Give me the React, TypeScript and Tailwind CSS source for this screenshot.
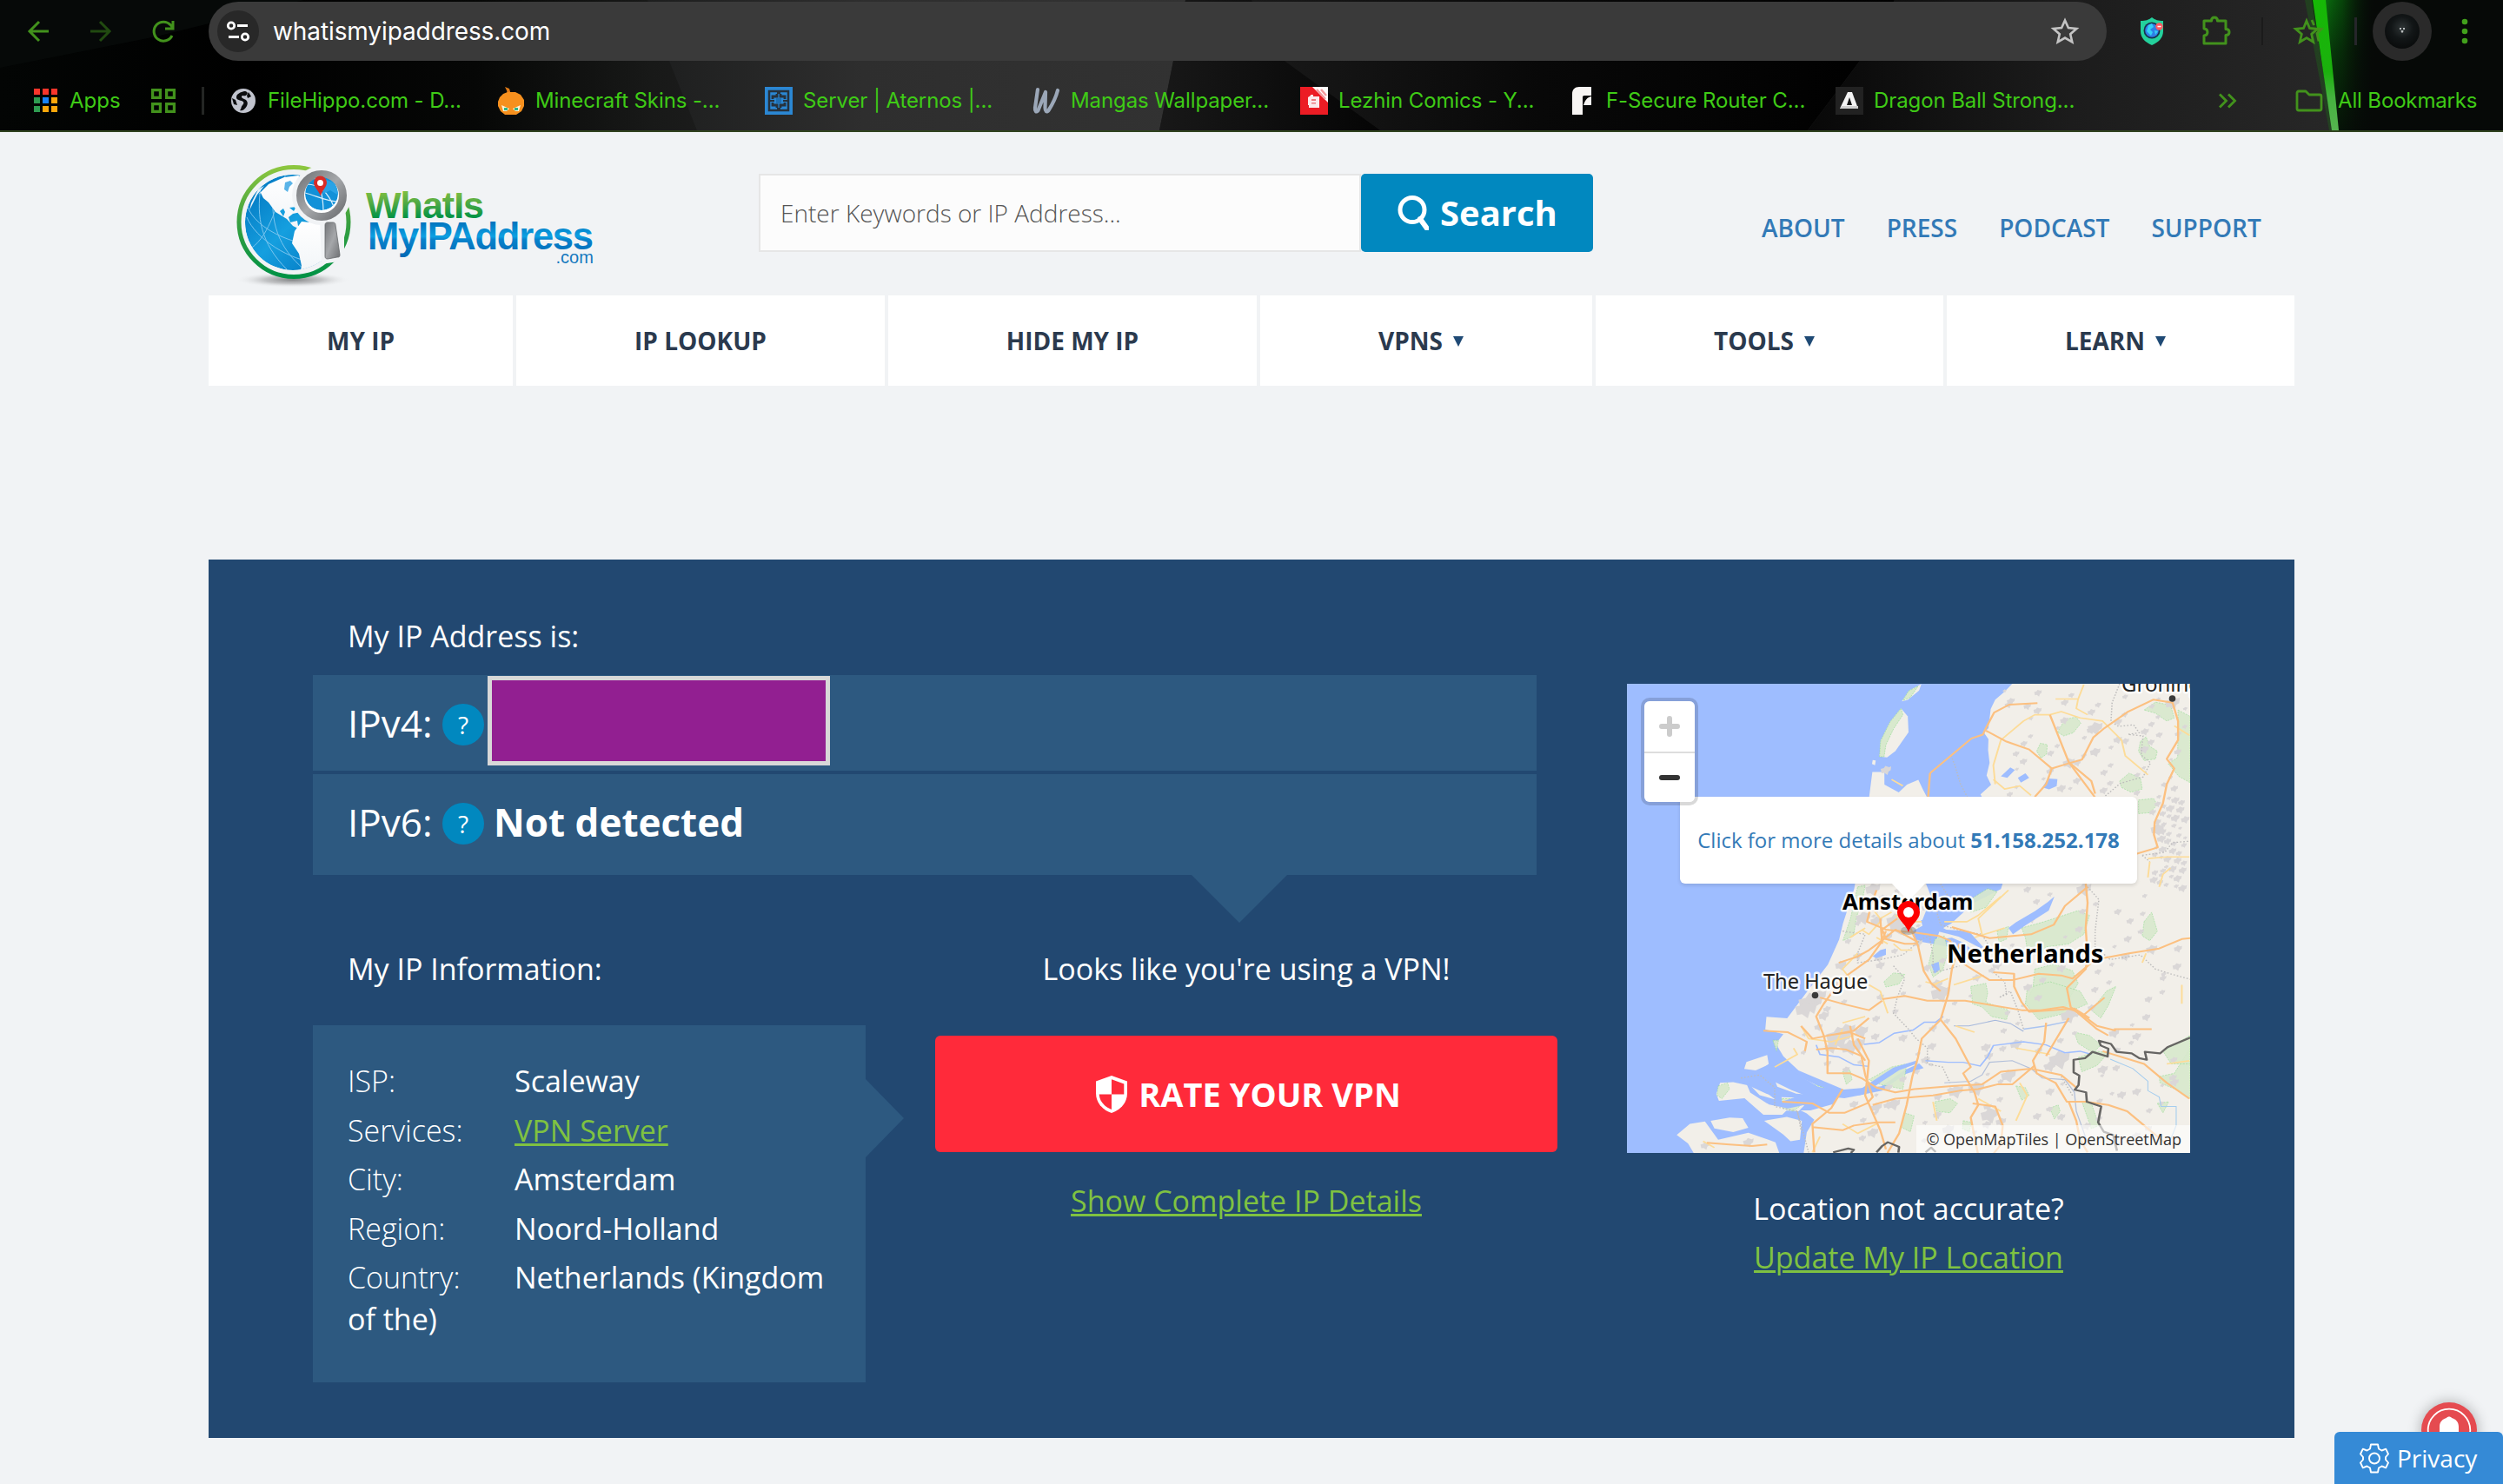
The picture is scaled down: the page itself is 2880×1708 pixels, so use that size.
import React from 'react';

/* ---------- Browser chrome ---------- */

function ThemeBackdrop() {
  return (
    <svg className="absolute inset-0 h-full w-full" viewBox="0 0 2880 150" preserveAspectRatio="none" aria-hidden="true">
      <defs>
        <linearGradient id="bg" x1="0" x2="1" y1="0" y2="0">
          <stop offset="0" stopColor="#030504" />
          <stop offset="0.1" stopColor="#000000" />
          <stop offset="0.19" stopColor="#060706" />
          <stop offset="0.26" stopColor="#181918" />
          <stop offset="0.3" stopColor="#1e1e1e" />
        </linearGradient>
        <linearGradient id="facetA" x1="0" x2="1" y1="0" y2="0">
          <stop offset="0" stopColor="#1d1e1e" />
          <stop offset="0.4" stopColor="#2e2e2e" />
          <stop offset="1" stopColor="#323232" />
        </linearGradient>
        <linearGradient id="facetB" x1="0" x2="1" y1="0" y2="0">
          <stop offset="0" stopColor="#181818" />
          <stop offset="1" stopColor="#050505" />
        </linearGradient>
        <linearGradient id="facetC" x1="0" x2="1" y1="0" y2="0">
          <stop offset="0" stopColor="#191919" />
          <stop offset="0.45" stopColor="#080808" />
          <stop offset="1" stopColor="#000000" />
        </linearGradient>
        <linearGradient id="facetD" x1="0" x2="1" y1="0" y2="0">
          <stop offset="0" stopColor="#080808" />
          <stop offset="0.5" stopColor="#1c1c1c" />
          <stop offset="1" stopColor="#272727" />
        </linearGradient>
        <linearGradient id="glow" x1="0" x2="1" y1="0" y2="0">
          <stop offset="0" stopColor="#0b7a10" />
          <stop offset="0.4" stopColor="#075c0b" stopOpacity="0.7" />
          <stop offset="1" stopColor="#060907" stopOpacity="0" />
        </linearGradient>
        <linearGradient id="glowFade" x1="0" x2="0" y1="0" y2="1">
          <stop offset="0" stopColor="#060907" stopOpacity="0" />
          <stop offset="0.4" stopColor="#060907" stopOpacity="0.45" />
          <stop offset="1" stopColor="#060907" stopOpacity="0.85" />
        </linearGradient>
        <linearGradient id="beam" x1="0" x2="0" y1="0" y2="1">
          <stop offset="0" stopColor="#16b806" />
          <stop offset="0.55" stopColor="#1bb10d" />
          <stop offset="0.75" stopColor="#45b33f" />
          <stop offset="1" stopColor="#56b450" />
        </linearGradient>
      </defs>
      <rect width="2880" height="150" fill="url(#bg)" />
      <path d="M0 0H350L180 42L0 78Z" fill="#060908" />
      <path d="M745 0H1364L1350 70L1334 150H802L770 70Z" fill="url(#facetA)" />
      <path d="M1364 0H1460L1590 150H1334Z" fill="url(#facetB)" />
      <path d="M1440 0H2180L2140 70L2080 150H1588L1478 70Z" fill="url(#facetC)" />
      <path d="M2180 0H2662L2684 150H2080L2140 70Z" fill="url(#facetD)" />
      <path d="M2660 0H2880V150H2684Z" fill="#060907" />
      <path d="M2670 0H2734L2730 150H2688Z" fill="url(#glow)" />
      <path d="M2670 0H2734L2730 150H2688Z" fill="url(#glowFade)" />
      <path d="M2652 0H2668L2684 150H2680Z" fill="#16a30a" opacity="0.2" />
      <path d="M2661 0H2676L2691 150H2683Z" fill="url(#beam)" />
    </svg>
  );
}

function Bookmark({ icon, label }: { icon: React.ReactNode; label: string }) {
  return (
    <div className="flex w-[308px] shrink-0 items-center gap-[12px]">
      {icon}
      <span className="whitespace-nowrap tracking-[-0.1px]">{label}</span>
    </div>
  );
}

const bookmarks: { label: string; icon: React.ReactNode }[] = [
  {
    label: 'FileHippo.com - D...',
    icon: (
      <svg className="size-8 shrink-0" viewBox="0 0 32 32">
        <circle cx="16" cy="16" r="14" fill="#c1c4ce" />
        <path d="M17 5c-4 1-9 3-9 7 0 3 3 3 6 4 3 1 3 3 1 5s-1 4-3 6c4 1 6-2 8-5 2-4 0-7-3-8-3-1-4-3-2-4 2 0 3 1 5-1s0-4-3-4z" fill="#0b0c0e" />
        <path d="M22 6l3 5-4 2-1-3zM3 13l4 2 2 6-4-1z" fill="#0b0c0e" />
      </svg>
    ),
  },
  {
    label: 'Minecraft Skins -...',
    icon: (
      <svg className="size-8 shrink-0" viewBox="0 0 32 32">
        <path d="M9 0l5 2 2 7h-4L11 4z" fill="#e07a17" />
        <path d="M3 12l4-4 5-2h9l6 3 4 6v7l-3 6-6 4H9l-5-4-3-6v-5z" fill="#f6901e" />
        <path d="M5 21l9 4-3 3H7zM27 21l-9 4 3 3h4z" fill="#fff3d6" />
        <path d="M8 24h4v3H8zM20 24h4v3h-4z" fill="#2fb58a" />
      </svg>
    ),
  },
  {
    label: 'Server | Aternos |...',
    icon: (
      <svg className="size-8 shrink-0" viewBox="0 0 32 32">
        <rect width="32" height="32" fill="#2b87d3" />
        <path d="M5 5h22v22H5z" fill="#2b87d3" stroke="#26323d" strokeWidth="2.500" />
        <path d="M9 14v-3h5V8M18 8v3h5v3M9 18v3h5v3M18 24v-3h5v-3" fill="none" stroke="#26323d" strokeWidth="2.800" />
        <path d="M6 16h5M21 16h5M14 7h4M14 25h4" fill="none" stroke="#26323d" strokeWidth="2" />
        <rect x="13" y="13" width="6" height="6" fill="#1f6fb2" />
      </svg>
    ),
  },
  {
    label: 'Mangas Wallpaper...',
    icon: (
      <svg className="size-8 shrink-0" viewBox="0 0 32 32" fill="none" stroke="#9ba7b8" strokeWidth="4.200" strokeLinejoin="round" strokeLinecap="round">
        <path d="M6 3L3 24c-.5 4 1.500 6 3.500 3L15 6l-.5 18c0 4 2 6 4 3C23 20 27 12 29 4" />
      </svg>
    ),
  },
  {
    label: 'Lezhin Comics - Y...',
    icon: (
      <svg className="size-8 shrink-0" viewBox="0 0 32 32">
        <rect width="32" height="32" fill="#ec1c24" />
        <path d="M14 0h18v18z" fill="#fff" />
        <path d="M19 3l10 11M24 3l6 7" stroke="#f59a9d" strokeWidth="2.500" />
        <path d="M9 12l3-2v-1h3v2h7v13H10v-3h-1z" fill="#fbe9ea" />
        <path d="M13 14h5v2h-5zM13 18h5v1.500h-5z" fill="#ec7a80" />
      </svg>
    ),
  },
  {
    label: 'F-Secure Router C...',
    icon: (
      <svg className="size-8 shrink-0" viewBox="0 0 32 32">
        <path d="M5 8c0-5 3-8 8-8h14v10H19c-1.500 0-2 .8-2 2v20H5z" fill="#f8f5f3" />
        <path d="M27 11v10h-9c2-6 4-9 9-10z" fill="#f8f5f3" />
      </svg>
    ),
  },
  {
    label: 'Dragon Ball Strong...',
    icon: (
      <svg className="size-8 shrink-0" viewBox="0 0 32 32">
        <rect width="32" height="32" fill="#222222" />
        <path d="M14 6h5l7 19H5z" fill="#f4f4f4" />
        <path d="M16 12l3 9h-6z" fill="#151515" />
        <path d="M6 22h20v3H6z" fill="#cfcfcf" />
      </svg>
    ),
  },
];

function BrowserChrome() {
  return (
    <header className="relative h-[152px] shrink-0 overflow-hidden border-b-2 border-[#30421f] bg-black font-['Inter',sans-serif]">
      <ThemeBackdrop />
      <div className="relative flex h-[72px] items-center">
        <div className="flex w-[240px] shrink-0 items-center pl-7 text-[#42921c]">
          <svg className="size-8" viewBox="0 0 32 32" fill="none" stroke="currentColor" strokeWidth="3">
            <path d="M28 16H6M17 5L6 16l11 11" />
          </svg>
          <svg className="ml-[39px] size-8 text-[#214a10]" viewBox="0 0 32 32" fill="none" stroke="currentColor" strokeWidth="3">
            <path d="M5 16h22M16 5l11 11-11 11" />
          </svg>
          <svg className="ml-[41px] size-8" viewBox="0 0 32 32" fill="none" stroke="currentColor" strokeWidth="3">
            <path d="M26 21A11 11 0 1 1 24.500 9l2 3M27 4v9h-9" />
          </svg>
        </div>
        <div className="flex h-[68px] w-[2184px] shrink-0 items-center rounded-full bg-[#3a3a3a] pl-[10px] pr-[30px]">
          <div className="flex size-12 items-center justify-center rounded-full bg-[#282828]">
            <svg className="size-7" viewBox="0 0 28 28" fill="none" stroke="#ffffff" strokeWidth="2.800">
              <circle cx="6" cy="7.500" r="3.700" />
              <path d="M13 7.500h12M3 20.500h12" />
              <circle cx="22" cy="20.500" r="3.700" />
            </svg>
          </div>
          <span className="ml-[16px] flex-1 text-[28px] leading-[34px] tracking-[-0.1px] text-white">whatismyipaddress.com</span>
          <svg className="size-9" viewBox="0 0 36 36" fill="none" stroke="#c4c4c4" strokeWidth="2.600">
            <path d="M18 5.500l3.900 8.600 9.400.9-7.100 6.200 2.100 9.200L18 25.600l-8.300 4.800 2.100-9.200L4.700 15l9.400-.9z" />
          </svg>
        </div>
        <svg className="ml-9 size-8 shrink-0" viewBox="0 0 32 32">
          <path d="M3 4C9 4 12 3 16 0c4 3 7 4 13 4v12c0 8-6 13-13 16C9 29 3 24 3 16z" fill="#24d19c" />
          <circle cx="16" cy="15" r="9.500" fill="#17324f" />
          <circle cx="16" cy="15" r="7.800" fill="#2f7fe6" />
          <path d="M12 9l4-2 2 4-4 3 3 3-2 4-5-5zM19 15l4 1-3 4z" fill="#35d0f5" />
          <circle cx="24.500" cy="10.500" r="4.200" fill="#ff5a62" />
          <path d="M22.500 10.500h4" stroke="#fff" strokeWidth="1.500" />
        </svg>
        <svg className="ml-10 size-9 shrink-0" viewBox="0 0 36 36" fill="none" stroke="#42921c" strokeWidth="3" strokeLinejoin="round">
          <path d="M4 6h8.500c0-2.500 1.500-4 3.500-4s3.500 1.500 3.500 4H29v9.500c2.500 0 4 1.500 4 3.500s-1.500 3.500-4 3.500V32H4v-9c3-.2 4-2 4-4s-1-3.800-4-4z" />
        </svg>
        <div className="ml-[34px] h-8 w-[2px] bg-[#1b1b1b]" />
        <svg className="ml-[34px] size-9 shrink-0" viewBox="0 0 36 36" fill="none" stroke="#42921c" strokeWidth="2.800">
          <path d="M16 6l3.500 8.500 9 .8-6.800 6 2 9L16 25.600l-7.700 4.700 2-9-6.800-6 9-.8zM22 5l2.500 6M28 15l5 .5-5 5 2 9" />
        </svg>
        <div className="ml-[35px] h-8 w-[3px] bg-[#26262a]" />
        <div className="ml-[18px] flex size-[68px] shrink-0 items-center justify-center rounded-full bg-[#2a2a2a]">
          <div className="flex size-10 items-center justify-center rounded-full bg-[radial-gradient(circle_at_50%_40%,#2e3435_0%,#121617_40%,#040505_100%)]">
            <svg className="size-5" viewBox="0 0 20 20" fill="#b9bdbe">
              <path d="M7 6h2v2H7zM11 6h2v2h-2zM8.500 9h3l-.5 2.500H9z" />
            </svg>
          </div>
        </div>
        <svg className="ml-[34px] h-8 w-2 shrink-0" viewBox="0 0 8 32" fill="#42a01c">
          <circle cx="4" cy="5" r="3.300" />
          <circle cx="4" cy="16" r="3.300" />
          <circle cx="4" cy="27" r="3.300" />
        </svg>
      </div>
      <div className="relative mt-[28px] flex h-8 items-center text-[24px] leading-8 text-[#3fcb16]">
        <div className="flex w-[264px] shrink-0 items-center pl-9">
          <svg className="size-8" viewBox="0 0 32 32">
            <path d="M3 2h7v7H3zM13 2h7v7h-7zM23 2h7v7h-7z" fill="#f8352b" />
            <path d="M3 12h7v7H3zM3 22h7v7H3z" fill="#2e9b50" />
            <path d="M13 12h7v7h-7z" fill="#1a82f7" />
            <path d="M23 12h7v7h-7zM13 22h7v7h-7zM23 22h7v7h-7z" fill="#fba60b" />
          </svg>
          <span className="ml-3">Apps</span>
          <svg className="ml-[33px] size-8" viewBox="0 0 32 32" fill="none" stroke="#42921c" strokeWidth="3.200">
            <path d="M3.600 3.600h8.800v8.800H3.600zM19.600 3.600h8.800v8.800h-8.800zM3.600 19.600h8.800v8.800H3.600zM19.600 19.600h8.800v8.800h-8.800z" />
          </svg>
          <div className="ml-[28px] h-8 w-[3px] bg-[#242624]" />
        </div>
        {bookmarks.map((b) => (
          <Bookmark key={b.label} icon={b.icon} label={b.label} />
        ))}
        <svg className="ml-[132px] h-5 w-6 shrink-0" viewBox="0 0 24 20" fill="none" stroke="#42921c" strokeWidth="2.800">
          <path d="M2 2.500l7.500 7.500L2 17.500M12 2.500l7.500 7.500-7.500 7.500" />
        </svg>
        <svg className="ml-[65px] size-8 shrink-0" viewBox="0 0 32 32" fill="none" stroke="#42921c" strokeWidth="2.800" strokeLinejoin="round">
          <path d="M2 7c0-1 .6-2 2-2h8l4 4h12c1.400 0 2 .9 2 2v14c0 1.100-.9 2-2 2H4c-1.200 0-2-.9-2-2z" />
        </svg>
        <span className="ml-[17px] whitespace-nowrap tracking-[-0.15px]">All Bookmarks</span>
      </div>
    </header>
  );
}

/* ---------- Site header ---------- */

function Logo() {
  return (
    <svg className="mt-[28px] h-[160px] w-[440px] shrink-0" viewBox="260 180 440 160" role="img" aria-label="WhatIsMyIPAddress.com">
      <defs>
        <linearGradient id="ringG" x1="0" x2="0" y1="0" y2="1">
          <stop offset="0" stopColor="#8cc63f" />
          <stop offset="0.5" stopColor="#39a040" />
          <stop offset="1" stopColor="#009245" />
        </linearGradient>
        <linearGradient id="oceanG" x1="0" x2="1" y1="0" y2="1">
          <stop offset="0" stopColor="#0071bc" />
          <stop offset="0.5" stopColor="#159fdf" />
          <stop offset="1" stopColor="#0071bc" />
        </linearGradient>
        <linearGradient id="metalG" x1="0" x2="1" y1="0" y2="1">
          <stop offset="0" stopColor="#75777a" />
          <stop offset="0.5" stopColor="#a5a7aa" />
          <stop offset="1" stopColor="#6d6f72" />
        </linearGradient>
        <linearGradient id="landG" x1="0" x2="0" y1="0" y2="1">
          <stop offset="0" stopColor="#ffffff" />
          <stop offset="1" stopColor="#f0f4f7" />
        </linearGradient>
        <linearGradient id="whatG" gradientUnits="userSpaceOnUse" x1="0" x2="0" y1="219" y2="251">
          <stop offset="0" stopColor="#83c141" />
          <stop offset="0.4" stopColor="#57ac44" />
          <stop offset="1" stopColor="#009245" />
        </linearGradient>
        <linearGradient id="myG" gradientUnits="userSpaceOnUse" x1="0" x2="0" y1="255" y2="296">
          <stop offset="0" stopColor="#0071bc" />
          <stop offset="0.42" stopColor="#0da0e2" />
          <stop offset="0.5" stopColor="#0883cc" />
          <stop offset="1" stopColor="#0068b4" />
        </linearGradient>
        <radialGradient id="shadowG">
          <stop offset="0" stopColor="#6f7072" stopOpacity="0.85" />
          <stop offset="0.5" stopColor="#8b8c8e" stopOpacity="0.45" />
          <stop offset="1" stopColor="#f1f3f5" stopOpacity="0" />
        </radialGradient>
        <clipPath id="globeClip">
          <circle cx="337" cy="256" r="55" />
        </clipPath>
        <clipPath id="lensClip">
          <circle cx="370" cy="223" r="19" />
        </clipPath>
      </defs>
      <ellipse cx="337" cy="322" rx="66" ry="9" fill="url(#shadowG)" />
      <circle cx="338" cy="255.500" r="63" fill="#f1f3f5" stroke="url(#ringG)" strokeWidth="5" />
      <g clipPath="url(#globeClip)">
        <circle cx="337" cy="256" r="55" fill="url(#oceanG)" />
        <g fill="none" stroke="#7cc5ee" strokeWidth="1">
          <path d="M284 250c10 25 50 50 80 52M290 285c20-15 30-50 40-90M300 215c-5 35 0 65 30 95M315 215c-5 40 5 70 35 95M284 236c10 30 60 50 110 50" />
        </g>
        <path d="M297 224l12-12 18-8 16-2 12 6-9 10-3 8 9 8-6 10-9 2-5 4 2 6 8-2 1 6 10 4 3 2-9-1-10-5-7-8-13-8-8-11-6-5-3-6z" fill="url(#landG)" />
        <path d="M328 210l6-2 3 3-4 4-2 6-4-3z" fill="#5bb4e8" />
        <path d="M322 243l4-3 2 4-2 5zM333 239l8-1-3 5z" fill="#159fdf" />
        <path d="M347 255l10 1 12 1 5 3v44l-15 12-15 5 3-15-3-14-8-12 3-14z" fill="url(#landG)" />
        <path d="M304 214l-7 4-8 16-2 8 9-18z" fill="#e8f2fa" />
      </g>
      <circle cx="370" cy="225" r="34" fill="#f1f3f5" />
      <path d="M368 250h28v50l-26 4z" fill="#f1f3f5" />
      <circle cx="370" cy="225" r="24.500" fill="#fff" stroke="url(#metalG)" strokeWidth="9" />
      <g clipPath="url(#lensClip)">
        <circle cx="370" cy="223" r="19" fill="#1291d8" />
        <path d="M351 222c12 3 26 10 38 10M353 212c14 0 24 8 32 28M362 205c8 12 10 24 10 40" fill="none" stroke="#d9eefa" strokeWidth="1.200" />
        <path d="M370 205l16 6 4 14-10-6-8 4z" fill="#2aa3e6" />
      </g>
      <path d="M369 226c-2-7-8-10-8-16a7.500 7.500 0 0 1 15 0c0 6-6 9-7 16z" fill="#d92c27" />
      <circle cx="368.500" cy="210.500" r="3.500" fill="#fff" />
      <path d="M374 259c0-2 1-3 3-3h6c2 0 3 1 3 3l5 34c0 3-1 3-3 3l-11 2c-2 0-3-1-3-3z" fill="url(#metalG)" stroke="#66686b" strokeWidth="0.800" />
      <text x="421" y="250.500" textLength="136" fontFamily="Liberation Sans, Arial, sans-serif" fontWeight="700" fontSize="43" fill="url(#whatG)" strokeLinejoin="round">
        WhatIs
      </text>
      <text x="423" y="286.500" textLength="260" fontFamily="Liberation Sans, Arial, sans-serif" fontWeight="700" fontSize="43.500" fill="url(#myG)" strokeLinejoin="round">
        MyIPAddress
      </text>
      <text x="639.500" y="302.500" fontFamily="Liberation Sans, Arial, sans-serif" fontSize="20" fill="#1579bf">
        .com
      </text>
    </svg>
  );
}

function SiteHeader() {
  return (
    <div className="flex h-[188px] items-start pl-5">
      <Logo />
      <form className="ml-[173px] mt-[48px] flex h-[90px] w-[960px] shrink-0">
        <div className="flex flex-1 items-center border-2 border-[#e6e6e6] bg-[#fcfcfc] pl-[23px] text-[28px] font-light leading-[40px] text-[#555555]">
          Enter Keywords or IP Address...
        </div>
        <div className="flex w-[267px] items-center rounded-[5px] bg-[#0188bf] pl-[42px] text-[40px] font-bold leading-[56px] text-white">
          <svg className="mr-[13px] h-10 w-9 shrink-0" viewBox="0 0 36 40" fill="none" stroke="#fff" strokeWidth="5">
            <circle cx="17" cy="16.500" r="14" />
            <path d="M26 27l8 11" strokeWidth="6" strokeLinecap="round" />
          </svg>
          Search
        </div>
      </form>
      <nav className="ml-[194px] mt-[90px] flex gap-[48px] text-[28px] font-semibold leading-[40px] text-[#337ab7]">
        <span>ABOUT</span>
        <span>PRESS</span>
        <span>PODCAST</span>
        <span>SUPPORT</span>
      </nav>
    </div>
  );
}

function NavCell({ label, width, menu }: { label: string; width: string; menu?: boolean }) {
  return (
    <div className={`${width} flex h-[104px] shrink-0 items-center justify-center bg-white`}>
      <span>{label}</span>
      {menu && (
        <svg className="ml-[12px] mr-[12px] mt-[2px] h-3 w-3" viewBox="0 0 12 12" fill="#1f4a75">
          <path d="M0 0h12L6 12z" />
        </svg>
      )}
    </div>
  );
}

function MainNav() {
  return (
    <nav className="flex gap-1 bg-[#f1f3f5] text-[28px] font-bold leading-[40px] text-[#2b3a4e]">
      <NavCell label="MY IP" width="w-[350px]" />
      <NavCell label="IP LOOKUP" width="w-[424px]" />
      <NavCell label="HIDE MY IP" width="w-[424px]" />
      <NavCell label="VPNS" width="w-[382px]" menu />
      <NavCell label="TOOLS" width="w-[400px]" menu />
      <NavCell label="LEARN" width="w-[400px]" menu />
    </nav>
  );
}

/* ---------- Map ---------- */

const greens = [
  'M1170 200l20-40 30-8 12 20-20 30-25 10z',
  'M1115 260l10-25 18 5-2 30-15 12z',
  'M1390 230l15-15 10 30 20 15-5 25-30 5-15-30z',
  'M1335 355l25-25 30 15 5 35-30 10-25-15z',
  'M1490 130l32 20v210l-30-20-28-40 25-20z',
  'M1400 130l30-25 40 10 10 40-20 10-30-25z',
  'M1385 415l40-5 10 20-20 25-30 3z',
  'M925 740l60-45 25 10-30 50-40 15z',
  'M1075 820l60-20 90-35 30 15-15 60-40 30-60 10-20 30-30-20-5-40z',
  'M1110 950l50-15 50 20 15 40-20 40-20 50-60 20-40-45 20-50z',
  'M640 690l20-5-8 50-15 50-8 60-28 15 20-70z',
  'M1010 830l30-15-5 40-20 10z',
  'M845 855l25-10 10 50-15 60-25 20-12-40z',
  'M710 990l25-28 30 5-15 30-35 10z',
  'M940 1005l40-10 5 30-5 30 60 25-5 30-40-10-25-30-25-10z',
  'M1090 1010l60-20 80 30 20 40-60 30-70 20-35-50z',
  'M1400 800l20-30 15 60-20 30-20-15z',
  'M1215 1150l40 10 30 30-20 25-40-30z',
  'M1225 1230l50-20 30 5-30 40-40 20z',
  'M670 1300l60-40 40-10-10 80-60-15z',
  'M600 1275l20-5 5 30-15 15z',
  'M845 1370l40-10 20 15-20 30-35-5z',
  'M1060 1320l25 5 10 25-20 15z',
  'M1440 1290l40-10 42-80v160l-40-30-40-20z',
  'M765 1405l25 10-10 50-25-15z',
  'M1235 1370l25 5 20 70-20 10z',
  'M920 1430l22 5-6 30-18-10z',
  'M1150 1390l22-10 5 20-15 25z',
  'M1435 1375l30-5-15 35z',
  'M270 1320l25-10 5 20-20 30-13-10z',
  'M440 1360l30 0 20 20-20 20-30-10z',
  'M415 1175l15 0-5 35z',
  'M480 1300l70 25-5 10-50-15z',
  'M1450 1210l72-50v90l-50 0z',
  'M1260 1080l40-60 25-15-20 60-20 40z',
];

const cities: [number, number, number][] = [
  [515, 1060, 32], [535, 1040, 22], [590, 1170, 34], [620, 1200, 24], [650, 1150, 18], [740, 800, 24], [655, 790, 20], [690, 760, 12],
  [860, 1030, 26], [850, 1000, 16], [800, 870, 12], [715, 322, 14], [1475, 110, 20], [1270, 190, 20], [1270, 265, 14], [1200, 300, 16],
  [1175, 1240, 28], [1150, 1260, 16], [1200, 1100, 22], [1180, 950, 12], [1240, 700, 20], [1435, 510, 18], [1420, 890, 15], [900, 1340, 20],
  [955, 1330, 22], [1040, 1290, 20], [880, 1460, 16], [990, 1415, 24], [1020, 1435, 14], [735, 1380, 18], [690, 1390, 15], [630, 1380, 12],
  [680, 1470, 15], [350, 1500, 14], [235, 1510, 12], [595, 940, 15], [640, 910, 12], [585, 1000, 10], [700, 940, 12], [1060, 1190, 16],
  [980, 1200, 13], [1320, 1155, 14], [1380, 1165, 12], [1450, 980, 9], [1090, 120, 10], [1040, 115, 10], [1060, 270, 9], [1350, 230, 10],
  [1440, 210, 9], [1180, 380, 12], [1480, 380, 10], [680, 700, 20], [760, 1170, 12], [1380, 1340, 12], [1480, 1310, 12], [1290, 1270, 14],
  [1340, 1350, 12], [530, 1340, 8], [560, 1250, 10], [700, 1040, 10], [820, 1240, 12], [1120, 880, 9], [1090, 700, 10], [1330, 770, 10],
  [1010, 940, 13], [1450, 640, 8], [1150, 1340, 12], [1120, 1210, 10], [1180, 1420, 11], [550, 1100, 14],
  [500, 1080, 26], [610, 1150, 24], [570, 1200, 18], [640, 1190, 20], [745, 820, 20], [690, 800, 16], [720, 850, 12], [770, 700, 12],
];

/* Western edge of the mainland at height y, used to keep villages out of the sea. */
const coastX = (y: number) => {
  if (y < 400) return 1010;
  if (y < 700) return 1400;
  if (y < 1100) return 650 - (y - 700) * 0.42;
  if (y < 1300) return 470;
  return 600;
};

const villages: [number, number, number][] = Array.from({ length: 230 }, (_, i): [number, number, number] => {
  const y = 70 + ((i * 0.6180339) % 1) * 1440;
  const x0 = coastX(y) + 20;
  return [x0 + ((i * 0.7548776) % 1) * (1510 - x0), y, 5 + ((i * 0.5698402) % 1) * 7];
}).filter(([x, y]) => !(y < 830 && y > 640 && x > 830 && x < 1010));

const blob = ([x, y, r]: [number, number, number]) =>
  `M${x - r} ${y - r * 0.4}l${r * 0.6} ${-r * 0.2} ${r * 0.3} ${-r * 0.5} ${r * 0.7} ${r * 0.3} ${r * 0.4} ${-r * 0.2} ${-r * 0.1} ${r * 0.9} ${-r * 0.4} ${r * 0.3} ${-r * 0.2} ${r * 0.8} ${-r * 0.6} ${-r * 0.5} ${-r * 0.5} ${r * 0.1}z`;

const majorRoads = [
  'M832 330l110-110 30-12 8-20 22-50 40-25 75-5',
  'M832 330l-5 75',
  'M980 195l55 35 60 25 60 60 50-18 30-10 30-70 30-30 60-50 70-40 50 10',
  'M1150 145l20 60 30 90 60 60 10 40',
  'M1155 315l-15 50-30 40',
  'M1475 105l15 60 0 60-30 60 20 30-20 50-10 60-22 60-2 40 10 40-70 25',
  'M1200 295l50 80 25 40',
  'M1245 680l5 60-5 80 5 90-5 40-50 60 10 60 30 30 40 40 30 20',
  'M1250 690l-60 60-30 60-60 30-110 12-100-35',
  'M690 700l-15 50-10 50 50 25 80 10 60 10 30 15 20 60 25 20 60 45 60 0 70-20 60 5 30 10 60-60 90-20 80-15 60-30 40-5',
  'M1000 960l55 5 0 40 20 50 20 30 60-5 60-5 40 30',
  'M780 820l20 55 15 80 20 40 25 25',
  'M910 870l-20 80-10 80-20 80-50 60-10 60-15 60-15 90-20 90-30 60 20 70',
  'M705 1045l60-10 60 15 100 0 150 30 50 0 60-10 40 15 50 45 50 15',
  'M715 830l-15 40-30 50-70 60-20 30-30 50-20 40 20 60 10 50 0 70 60 0 30 15 40 30 50 15 50-10 100-10 80-5 50-40 80-10 80 20 40 40',
  'M590 930l50-20 30-20 40-35 30-30 60 40',
  'M860 1110l40 60 40 90-20 20 30 60 10 40-20 40 10 60 10 60',
  'M1140 1120l-5 60-30 60 10 40 50 30 30 60 50 0 60 10 50 20 60 60 40 40',
  'M1235 1100l60-60M1200 1105l-60 120',
  'M500 1210l5-30-50-30-65-5M530 1205l40-5 40 5 40 20 10 60 20 70-15 20-60 30-40 0-45-30-80-5',
  'M640 1170l30 70-5 60-5 50 40 110 15 60',
  'M680 1380l60-20 100-10 70-15 50-5 50-15 40 0 60-60',
  'M600 1330l-30 60-50 50 5 90M520 1450l80 10 30-15 60-10 50 0',
  'M945 1375l60 10 20 60-5 60-20 30',
  'M240 1500l60 5 60 5 40-5M1320 1140l100 0M540 1040l60 20 70 20 35-30',
  'M1200 1370l20 60 10 60 20 40M1290 1210l110 40 60 60 60 50',
  'M490 1130l30 40 110-25 40-40M560 1160l60-10 40 20M620 1130l10 60 30 50M700 790l5 80M745 790l-40 35 10 30 50 15 30 0',
];

const minorRoads = [
  'M1005 365l-5-60 20-80 60-60 30-20 40 0 30-10 50 20 60 10 50 60 10 50 60 60',
  'M1000 350l30 30 40-10 30 30',
  'M1165 95l60 0 15-45M1225 95l-5 30 30 20',
  'M1480 180l40 30M1410 600l50-5 60 0M1410 660l5-50M1440 690l10-40 20-20',
  'M680 760l20 30 30-20M700 800l-30 40-20-15M740 780l30 20 40 0M620 850l40-30',
  'M870 800l60 0 30-20 60-60M950 850l80-30M1040 700l-80 90 10 50',
  'M735 870l20 20 30 0M690 850l30 20M640 900l-40 50 20 30M720 1090l-20-70-30-20',
  'M490 1130l20 40 60 10 60-20M600 1120l60-20M580 1190l20-50M470 1200l10 20-60 40',
  'M840 1000l40-20M895 1000l80-30M820 990l30 10',
  'M1060 1200l90 20M900 1130l50 20M1395 930l10-30M1500 1060l0-60',
  'M1070 1310l20 40-30 80M960 1360l60 40M850 1430l-10-60M1460 1250l60-10',
  'M600 1440l40 30 50-30M540 1480l-20 50M730 350l30 20M230 1495l30 20',
];

function MapArt() {
  return (
    <svg className="absolute inset-0 h-full w-full" viewBox="28 47 1494 1485" preserveAspectRatio="none" aria-hidden="true">
      <rect x="28" y="47" width="1494" height="1485" fill="#9ebdff" />
      <g fill="#f2efe9">
        <path d="M1050 47l-20 25-25 25-12 30-6 60-12 15 12 20-1 35 4 40-8 40 12 30-28 30 14 32 60-5 40 18 20 100-60 80-20 75-72 44-60 65-30 20-8 30 40-5 30 15 35 35-10 10-60-30-40-10-50-10-10-30 30-20 20-90-30-90 25-100 5-100-22-50-12-30-30 15-22 25-38-25 0-40-32 0-10 94-38 275-30 111-10 50-30 80-58 90-50 80-55-5-3 40 48 15-20 30 20 40 40 45 60 30 60 30 100-10 60-50 40-22 12 14-50 20-60 52-60 14-50-2-20 30-60 20-30 0-40-25 60 35 20 20-20 40-10 80 20 30h1040V47z" />
        <path d="M757 103l20-35 32-20-6 20-30 30z" />
        <path d="M755 125l18 25 2 50-35 60-22 20-20-3 3-50 25-60z" />
        <path d="M680 288l8 2-2 15-8-4z" />
        <path d="M400 1222l-55 22-6 22 40 6 25-22z" />
        <path d="M405 1255l50 15 55 35 52 30-30 14-55-5-50-22z" />
        <path d="M265 1345l10-35 35-2 40 10 55 30 50 45-15 18-50 0-50-52-68 8z" />
        <path d="M438 1355l40 2 20 25-15 18-40-3z" />
        <path d="M250 1430l50-10 35 2 15 30-40 14-50-12z" />
        <path d="M392 1430l60-12 40 12-5 60-25 5-20-22z" />
        <path d="M160 1475l35-35 40-8 35 58 80-22 72 30 10 34H205l-15-30z" />
      </g>
      <g fill="#d8e9cd" stroke="#8fdc8f" strokeWidth="1.500" strokeDasharray="5 3">
        {greens.map((d) => (
          <path key={d} d={d} opacity="0.9" />
        ))}
        <path d="M755 125l5 20-25 45-20 50-5 38-12 0 3-50 25-60zM800 55l-20 35-20 10 15-30z" />
      </g>
      <g fill="#dad7d7">
        {cities.map((c, i) => (
          <path key={i} d={blob(c)} />
        ))}
        {villages.map((c, i) => (
          <path key={i} d={blob(c)} />
        ))}
      </g>
      <g fill="#9ebdff">
        <path d="M850 680h150l-70 48-58 62-62 10 20-60 30-20z" />
        <path d="M808 795l22 0 45 30 60 5 38 50-5 5-60-38-50-15-45-15z" />
        <path d="M1162 720l-15 45-60 45-35 30-12-20 20-18 50-35 35-30z" />
        <path d="M1020 340l25-28 12 8-20 25zM1065 345l20-15 10 15-22 15zM1130 375l15-28 25 2-2 22-20 10z" />
        <path d="M680 910l20-20 15-5 0 20-25 10zM835 935l20-8 3 25-14 12z" />
        <path d="M405 1252l60 20 70 50 60 15 50-5 40-32 50-38 60-22 5 8-50 22-45 35-50 42-50 12-60-8-30 25-60 15-50-12-50-38-15-42 40 50 60 20 55-22-30-14-60-35-50-20z" />
      </g>
      <g fill="none" stroke="#9ebdff" strokeWidth="4">
        <path d="M657 1188l40-5 40-30 50-10 30-25 30 0 20-18" />
        <path d="M530 1190l10 30 50 8 40 25 40 5" />
        <path d="M820 1240l60 5 40 0 45 12 20-30 15-35 80-12 60 10 50 25 40-5 30 10" />
        <path d="M1080 1140l60-10 60-15" stroke="#aac4f0" />
        <path d="M895 1130l40 0 70-18 40 10 35 25" stroke="#a6b8dc" strokeWidth="3" />
        <path d="M870 1310l70-5 30-20 20-40 60-5 50 25 30 30 60 5 25 40 5 60 30 100" stroke="#b3c0da" strokeWidth="3" />
        <path d="M1310 1235l60 30 40 40 0 30 30 20 5 30 40 0 0 60-20 60" stroke="#a5cdee" strokeWidth="2.500" />
      </g>
      <g fill="none" stroke="#bdbcbc" strokeWidth="3.500" strokeDasharray="4 5">
        <path d="M888 275l10 30 15 60 20 45" />
        <path d="M1335 47l-20 60-3 60 20 15 40-5 15 25-30 5 40 5-5 60 25 25-20 45-60 20-50 50" />
        <path d="M1395 590l60-10 20-30 47-5M1395 590l20 20M1250 690l30 40-10 100 0 50 40 40 80-15 40 45 40 15 60 20" />
        <path d="M860 680l20 40-30 50 10 40 60 20 50 10 30 60" />
        <path d="M600 830l60 10-20 60 0 30 60-10 60-15 50-50 20-10 10 60 0 40" />
        <path d="M735 940l30 40-20 60-10 50 40 50 20 30 30 30 0 50 40 10 20 50" />
        <path d="M1000 960l30 30 5 40-20 10 30-20 20 60 15 60" />
        <path d="M330 1295l50-10 40 40 0 60 60 15 30 130M480 1400l10 60" />
        <path d="M1180 1290l30 60M840 960l40-10 30-10" />
      </g>
      <g fill="none" stroke="#fddc98" strokeWidth="4.500" strokeLinejoin="round">
        {minorRoads.map((d) => (
          <path key={d} d={d} />
        ))}
      </g>
      <g fill="none" stroke="#fcc080" strokeWidth="5.500" strokeLinejoin="round">
        {majorRoads.map((d) => (
          <path key={d} d={d} />
        ))}
      </g>
      <g fill="none" stroke="#666563" strokeWidth="6" strokeLinejoin="round">
        <path d="M1522 1167l-60 30-20 20-40-5 5 25-20-5-20-15-40-5-15-25-32-10 5 15 20 10-2 25-40-15-20 20-30 5 0 40 15 10-2 30-10 15 30 8 2 30 38 15-8 50 15 30 25 10 10 50" />
        <path d="M575 1530l40-12 15 4-8 10M690 1530l15-20 15-12 30 15-2 18M820 1530l15-15 12 14" />
      </g>
    </svg>
  );
}

function MapPanel() {
  return (
    <div className="relative h-[540px] w-[648px] overflow-hidden bg-[#9ebdff]">
      <MapArt />
      <svg className="absolute inset-0 h-full w-full" viewBox="0 0 648 540">
        <g fontFamily="Noto Sans, Open Sans, sans-serif" fill="#000" stroke="#fff" strokeOpacity="0.85" strokeWidth="5" strokeLinejoin="round" paintOrder="stroke">
          <text x="569" y="8.500" fontSize="24" fill="#222">Groningen</text>
          <text x="157" y="350.500" fontSize="23.600" fill="#222">The Hague</text>
          <text x="248" y="259.500" fontSize="25.800" fontWeight="700">Amsterdam</text>
          <text x="368" y="321" fontSize="29" fontWeight="700">Netherlands</text>
        </g>
        <circle cx="216.500" cy="358.500" r="3.800" fill="#3a3a3a" />
        <circle cx="627.500" cy="17" r="3.800" fill="#3a3a3a" />
      </svg>
      <div className="absolute bottom-0 right-0 flex h-8 w-[315px] items-center justify-end whitespace-nowrap bg-white/60 pr-[10px] text-[18px] leading-[26px] text-[#333]">
        © OpenMapTiles | OpenStreetMap
      </div>
      <div className="absolute left-[61px] top-[130px] flex h-[100px] w-[526px] items-center justify-center whitespace-pre rounded-[6px] bg-white text-[24px] leading-[36px] text-[#337ab7] shadow-[0_2px_4px_rgba(0,0,0,0.12)]">
        Click for more details about <b className="font-bold">51.158.252.178</b>
      </div>
      <svg className="absolute left-[304px] top-[229px] h-[60px] w-10" viewBox="0 0 40 60">
        <path d="M0 0h40L21 20h-2z" fill="#fff" />
        <ellipse cx="20" cy="55" rx="9" ry="5" fill="#777" opacity="0.45" />
        <path d="M20 57C17 47 7 43 7 34a13 13 0 0 1 26 0c0 9-10 13-13 23z" fill="#fe0000" />
        <circle cx="20" cy="34" r="6" fill="#fff" />
      </svg>
      <div className="absolute left-4 top-4 flex h-[124px] w-[66px] flex-col rounded-[10px] border-4 border-black/15 bg-clip-padding">
        <div className="flex h-[58px] items-center justify-center rounded-t-[6px] bg-white">
          <svg className="size-6" viewBox="0 0 24 24" stroke="#cccccc" strokeWidth="6" strokeLinecap="round">
            <path d="M3 12h18M12 3v18" />
          </svg>
        </div>
        <div className="flex h-[58px] items-center justify-center rounded-b-[6px] border-t-2 border-[#dddddd] bg-white">
          <svg className="size-6" viewBox="0 0 24 24" stroke="#333333" strokeWidth="6" strokeLinecap="round">
            <path d="M3 12h18" />
          </svg>
        </div>
      </div>
    </div>
  );
}

/* ---------- Main panel ---------- */

function HelpDot() {
  return (
    <span className="relative top-[2px] ml-[12px] flex size-12 shrink-0 items-center justify-center rounded-full bg-[#0188bf] text-[28px] leading-[48px]">
      ?
    </span>
  );
}

function InfoRow({ label, children }: { label: string; children: React.ReactNode }) {
  return (
    <li className="mb-[9px]">
      <span className="inline-block w-[192px] font-light">{label}</span>
      {children}
    </li>
  );
}

function IpPanel() {
  return (
    <main className="mt-[200px] flex h-[1011px] items-start bg-[#224871] pl-[120px] text-[34px] leading-[48px] text-white">
      <div className="w-[1432px] shrink-0 pt-[64px]">
        <h2 className="pl-10">My IP Address is:</h2>
        <div className="relative mt-[21px] flex w-[1408px] flex-col gap-1">
          <div className="flex h-[110px] items-center bg-[#2d5980] pl-10">
            <span className="w-[97px] text-[44px] leading-[62px]">IPv4:</span>
            <HelpDot />
            <div className="mb-[5px] ml-1 h-[103px] w-[394px] border-[5px] border-[#d8d8d8] bg-[#921f91]" />
          </div>
          <div className="flex h-[116px] items-center bg-[#2d5980] pb-[6px] pl-10">
            <span className="w-[97px] text-[44px] leading-[62px]">IPv6:</span>
            <HelpDot />
            <span className="ml-[11px] text-[44px] font-bold leading-[62px]">Not detected</span>
          </div>
          <svg className="absolute left-[1011px] top-full h-[55px] w-[110px]" viewBox="0 0 110 55" fill="#2d5980">
            <path d="M0 0h110L55 55z" />
          </svg>
        </div>
        <div className="mt-[84px] flex gap-20">
          <section className="w-[636px] shrink-0">
            <h2 className="pl-10">My IP Information:</h2>
            <div className="relative mt-[41px] h-[411px] bg-[#2d5980] px-10 pt-[41px]">
              <ul className="leading-[47.6px]">
                <InfoRow label="ISP:">Scaleway</InfoRow>
                <InfoRow label="Services:">
                  <span className="text-[#7fc241] underline decoration-[3px] underline-offset-[2px]">VPN Server</span>
                </InfoRow>
                <InfoRow label="City:">Amsterdam</InfoRow>
                <InfoRow label="Region:">Noord-Holland</InfoRow>
                <InfoRow label="Country:">Netherlands (Kingdom of the)</InfoRow>
              </ul>
              <svg className="absolute left-full top-[62px] h-[90px] w-[44px]" viewBox="0 0 44 90" fill="#2d5980">
                <path d="M0 0l44 45L0 90z" />
              </svg>
            </div>
          </section>
          <section className="flex w-[716px] shrink-0 flex-col items-center">
            <p>Looks like you're using a VPN!</p>
            <div className="mt-[53px] flex h-[134px] w-full items-center justify-center rounded-[6px] bg-[#ff2a3a] pl-[5px] text-[38px] font-bold">
              <svg className="mr-[13px] h-[43px] w-[36px]" viewBox="0 0 36 43">
                <path d="M18 0l18 6.500V20c0 11-7 19-18 23C7 39 0 31 0 20V6.500z" fill="#fff" />
                <path d="M18 4.200l14.300 5.200V21.500H18zM3.700 21.500H18V39C9.500 35.500 4.200 29.500 3.700 21.500z" fill="#ff2a3a" />
              </svg>
              RATE YOUR VPN
            </div>
            <span className="mt-[32px] text-[#7fc241] underline decoration-[3px] underline-offset-[2px]">Show Complete IP Details</span>
          </section>
        </div>
      </div>
      <div className="ml-20 flex w-[648px] flex-col items-center pt-[143px]">
        <MapPanel />
        <p className="mt-[40px]">Location not accurate?</p>
        <span className="mt-2 text-[#7fc241] underline decoration-[3px] underline-offset-[2px]">Update My IP Location</span>
      </div>
    </main>
  );
}

/* ---------- Floating corner widgets ---------- */

function CornerWidgets() {
  return (
    <div className="absolute bottom-0 right-0 flex w-[194px] flex-col">
      <div className="h-[34px]">
        <div className="ml-[100px] h-16 w-16 rounded-full bg-[#e54b50] shadow-[0_0_16px_rgba(0,0,0,0.3)]">
          <svg className="size-16" viewBox="0 0 64 64">
            <circle cx="32" cy="32" r="24.300" fill="none" stroke="#fff" strokeWidth="1.800" />
            <path d="M21 40V28c0-6 4-9 8-10 1-2 5-2 6 0 4 1 8 4 8 10v12z" fill="#fff" />
          </svg>
        </div>
      </div>
      <div className="relative flex h-[60px] items-center rounded-t-[6px] bg-[#358ad6] pl-[29px] text-[28px] leading-[40px] text-white">
        <svg className="h-[35px] w-[34px]" viewBox="0 0 34 35" fill="none" stroke="#fff" strokeWidth="1.900" strokeLinejoin="round">
          <path d="M13 1.500h8l1 5 3.500 2 4.700-1.800 2.800 5.800-3 3.500v3l3 3.500-2.800 5.800-4.700-1.800-3.500 2-1 5h-8l-1-5-3.500-2-4.700 1.800L1 22.500 4 19v-3l-3-3.500 2.800-5.800 4.700 1.800 3.500-2z" />
          <circle cx="17" cy="17.500" r="6" />
        </svg>
        <span className="ml-[9px]">Privacy</span>
      </div>
    </div>
  );
}

export default function App() {
  return (
    <div className="relative flex h-[1708px] w-[2880px] flex-col overflow-hidden bg-[#f1f3f5] font-['Open_Sans',sans-serif]">
      <BrowserChrome />
      <div className="mx-auto w-[2400px]">
        <SiteHeader />
        <MainNav />
        <IpPanel />
      </div>
      <CornerWidgets />
    </div>
  );
}
